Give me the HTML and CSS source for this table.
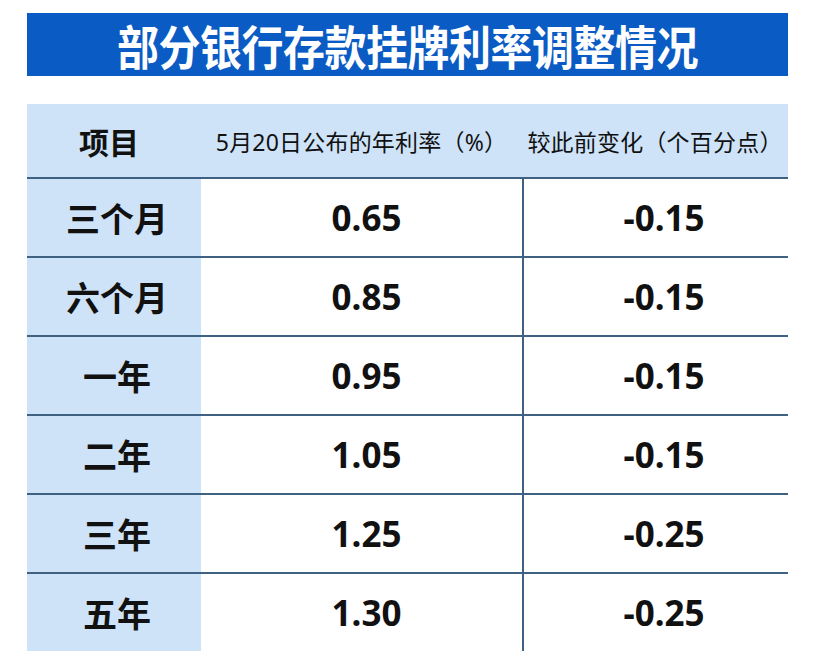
FILE: index.html
```html
<!DOCTYPE html>
<html>
<head>
    <meta charset="UTF-8">
    <title>部分银行存款挂牌利率调整情况</title>
    <link rel="stylesheet" href="styles.css">
</head>
<body>
<div class="page">
    <div class="title-bar"><!-- Title -->
        <span class="title-text">部分银行存款挂牌利率调整情况</span>
    </div>
    <table class="rate-table"><!-- Rates -->
        <thead>
            <tr>
                <th class="head-item">项目</th>
                <th class="head-text head-rate">5月20日公布的年利率（%）</th>
                <th class="head-text head-change">较此前变化（个百分点）</th>
            </tr>
        </thead>
        <tbody>
            <tr>
                <td class="item-cell">三个月</td>
                <td class="rate-cell">0.65</td>
                <td class="change-cell">-0.15</td>
            </tr>
            <tr>
                <td class="item-cell">六个月</td>
                <td class="rate-cell">0.85</td>
                <td class="change-cell">-0.15</td>
            </tr>
            <tr>
                <td class="item-cell">一年</td>
                <td class="rate-cell">0.95</td>
                <td class="change-cell">-0.15</td>
            </tr>
            <tr>
                <td class="item-cell">二年</td>
                <td class="rate-cell">1.05</td>
                <td class="change-cell">-0.15</td>
            </tr>
            <tr>
                <td class="item-cell">三年</td>
                <td class="rate-cell">1.25</td>
                <td class="change-cell">-0.25</td>
            </tr>
            <tr>
                <td class="item-cell">五年</td>
                <td class="rate-cell">1.30</td>
                <td class="change-cell">-0.25</td>
            </tr>
        </tbody>
    </table>
</div>
</body>
</html>
```

FILE: styles.css
```css
body {
    margin: 0;
    background-color: white;
    font-family: "Noto Sans", "Noto Sans CJK SC", sans-serif;
    color: #111;
}

.page {
    width: 761px;
    margin-left: 27px;
    padding-top: 13px;
}

/* Title */
.title-bar {
    height: 63px;
    background-color: #0b5bc4;
    display: flex;
    align-items: center;
    justify-content: center;
}

.title-text {
    display: inline-block;
    color: white;
    font-family: "Noto Sans CJK SC", sans-serif;
    font-size: 42px;
    font-weight: 700;
    letter-spacing: -0.5px;
    line-height: 1;
    transform: scaleY(1.12);
}

/* Rates */
.rate-table {
    margin-top: 28px;
    width: 761px;
    table-layout: fixed;
    border-collapse: separate;
    border-spacing: 0;
}

.rate-table th {
    box-sizing: border-box;
    height: 73px;
    padding: 0;
    background-color: #cee3f8;
    text-align: center;
    white-space: nowrap;
}

/* column widths come from the header row */
.head-item {
    width: 174px;
    font-family: "Noto Sans CJK SC", sans-serif;
    font-size: 30px;
    font-weight: 700;
    padding-right: 10px !important;
}

.head-rate {
    width: 321px;
}

.head-change {
    width: 266px;
}

.head-text {
    font-size: 23px;
    font-weight: 400;
    letter-spacing: 0.2px;
}

.rate-table td {
    height: 77px;
    padding: 0;
    border-top: 2px solid #3f6182;
    text-align: center;
}

.item-cell {
    background-color: #cee3f8;
    font-family: "Noto Sans CJK SC", sans-serif;
    font-size: 34px;
    font-weight: 700;
    padding-left: 6px !important;
}

.rate-cell, .change-cell {
    font-size: 35px;
    font-weight: 700;
}

.rate-cell {
    padding-left: 10px !important;
}

.change-cell {
    border-left: 2px solid #3f6182;
    padding-left: 16px !important;
}
```
